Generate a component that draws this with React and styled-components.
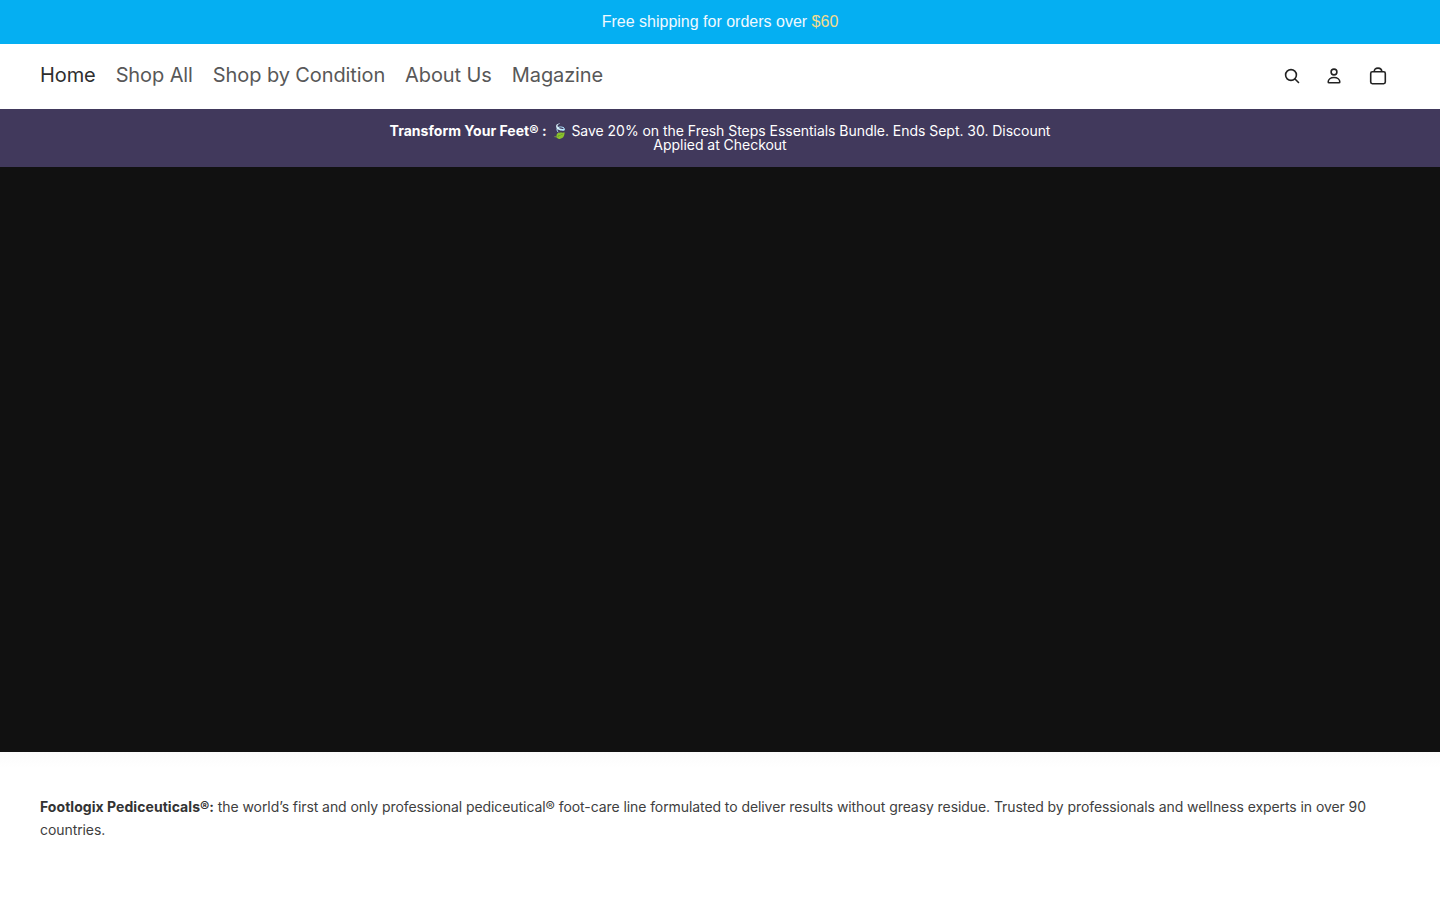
import React from 'react';
import styled, { createGlobalStyle } from 'styled-components';

const GlobalStyle = createGlobalStyle`
  * { box-sizing: border-box; }
  body { margin: 0; background: #fff; font-family: Inter, "Liberation Sans", sans-serif; overflow: hidden; }
`;

const ShippingBar = styled.div`
  height: 44px;
  display: flex;
  align-items: center;
  justify-content: center;
  background: #05aff2;
  color: #f0f9ff;
  font: 16px/20px "Liberation Sans", Arial, sans-serif;
  white-space: pre;
`;

const Amount = styled.span`
  color: #f5dc8c;
`;

const Header = styled.header`
  height: 65px;
  padding: 0 40px;
  display: flex;
  align-items: center;
  justify-content: space-between;
  background: #fff;
`;

const Nav = styled.nav`
  display: flex;
  gap: 20px;
  padding-bottom: 3px;
`;

const NavLink = styled.a`
  font-size: 20px;
  line-height: 28px;
  letter-spacing: -0.1px;
  color: ${({ $active }) => ($active ? '#2e2e2e' : '#585858')};
`;

const Actions = styled.div`
  display: flex;
  align-items: center;
  padding-bottom: 2px;
`;

const IconButton = styled.button`
  width: ${({ $width }) => $width || 44}px;
  height: 44px;
  padding: 0;
  border: 0;
  background: none;
  display: grid;
  place-items: center;
`;

const PromoBar = styled.section`
  height: 58px;
  padding-top: 15px;
  display: flex;
  justify-content: center;
  background: #41395c;
`;

const PromoText = styled.p`
  width: 680px;
  margin: 0;
  color: #fff;
  font-size: 14px;
  line-height: 14px;
  letter-spacing: -0.035px;
  text-align: center;
`;

const PromoLead = styled.strong`
  letter-spacing: 0.03px;
`;

const Hero = styled.section`
  height: 585px;
  background: #111;
`;

const Intro = styled.section`
  padding: 43px 40px;
  background: linear-gradient(#fbfbfb, #fff 16px);
`;

const IntroText = styled.p`
  margin: 0;
  font-size: 14px;
  line-height: 23px;
  letter-spacing: -0.077px;
  color: #404040;
`;

const IntroLead = styled.strong`
  letter-spacing: 0.05px;
  color: #333;
`;

const links = ['Home', 'Shop All', 'Shop by Condition', 'About Us', 'Magazine'];

export default function App() {
  return (
    <>
      <GlobalStyle />
      <ShippingBar>Free shipping for orders over <Amount>$60</Amount></ShippingBar>
      <Header>
        <Nav>
          {links.map((label, i) => <NavLink key={label} $active={i === 0}>{label}</NavLink>)}
        </Nav>
        <Actions>
          <IconButton $width={40} aria-label="Search">
            <svg width="20" height="20" viewBox="0 0 20 20" fill="none" stroke="#222" strokeWidth="1.6" strokeLinecap="round">
              <circle cx="9" cy="9" r="5.4" /><path d="M13 13l3.5 3.5" />
            </svg>
          </IconButton>
          <IconButton aria-label="Account">
            <svg width="20" height="20" viewBox="0 0 20 20" fill="none" stroke="#222" strokeWidth="1.6" strokeLinejoin="round">
              <circle cx="10" cy="6" r="2.9" /><path d="M4.2 15.9c0-2.500 2.400-4.400 5.800-4.400s5.800 1.900 5.800 4.400c0 .6-.3.900-.9.900h-9.800c-.6 0-.9-.3-.9-.9z" />
            </svg>
          </IconButton>
          <IconButton aria-label="Cart">
            <svg width="20" height="20" viewBox="0 0 20 20" fill="none" stroke="#222" strokeWidth="1.6">
              <rect x="2.7" y="5.8" width="14.6" height="11.9" rx="1.6" /><path d="M6.2 5.8c0-2.400 1.300-3.700 3.800-3.700s3.800 1.300 3.800 3.700" />
            </svg>
          </IconButton>
        </Actions>
      </Header>
      <PromoBar>
        <PromoText><PromoLead>Transform Your Feet® :</PromoLead> 🍃 Save 20% on the Fresh Steps Essentials Bundle. Ends Sept. 30. Discount Applied at Checkout</PromoText>
      </PromoBar>
      <Hero />
      <Intro>
        <IntroText><IntroLead>Footlogix Pediceuticals®:</IntroLead> the world’s first and only professional pediceutical® foot-care line formulated to deliver results without greasy residue. Trusted by professionals and wellness experts in over 90 countries.</IntroText>
      </Intro>
    </>
  );
}
